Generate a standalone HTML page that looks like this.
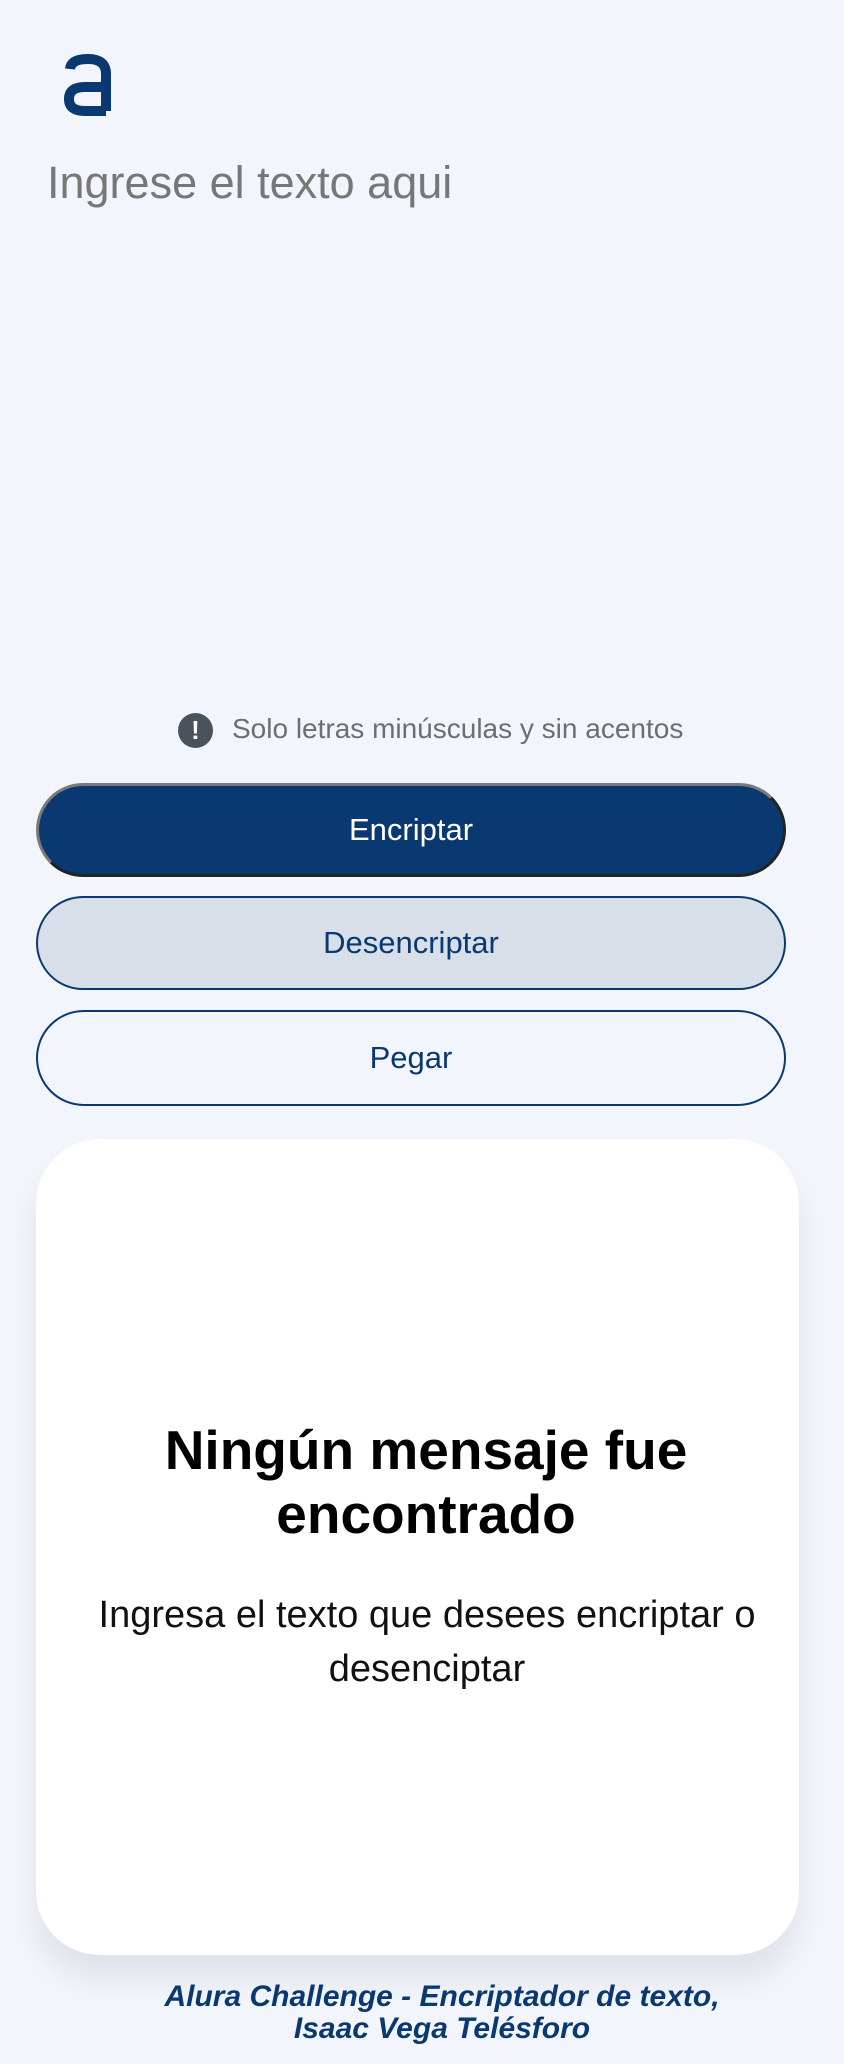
<!DOCTYPE html>
<html><head><meta charset="utf-8">
<style>
html,body{margin:0;padding:0}
body{width:844px;height:2064px;background:#f3f5fc;position:relative;overflow:hidden;font-family:"Liberation Sans",Arial,sans-serif}
.abs{position:absolute}
.ph{left:47px;top:157px;font-size:45px;color:#777;line-height:52px}
.btn{position:absolute;left:36px;width:750px;border-radius:48px;box-sizing:border-box;text-align:center;font-size:31px;display:flex;align-items:center;justify-content:center}
.b1{top:783px;height:94px;background:#0a3871;color:#fff;border:3px solid;border-color:#7a7a7a #222 #222 #7a7a7a}
.b2{top:896px;height:94px;background:#d8dfe8;color:#0a3871;border:2px solid #0a3871}
.b3{top:1010px;height:96px;background:transparent;color:#0a3871;border:2px solid #0a3871}
.card{left:36px;top:1139px;width:763px;height:816px;background:#fff;border-radius:64px;box-shadow:0 24px 32px rgba(0,0,0,0.08)}
.h{left:36px;width:780px;top:1418px;text-align:center;font-weight:bold;font-size:55px;line-height:64px;color:#000}
.p{left:30px;width:794px;top:1588px;text-align:center;font-size:38px;line-height:54px;color:#111}
.f{left:0;width:884px;top:1981px;text-align:center;font-weight:bold;font-style:italic;font-size:30px;line-height:32px;color:#0a3871}
</style></head><body>
<svg class="abs" style="left:63px;top:54px" width="50" height="62" viewBox="0 0 50 62">
<path d="M7 15 Q8 5 25 5 Q43 5 43 20 V57" stroke="#0a3871" stroke-width="10" fill="none"/>
<path d="M43 33 H22 Q6 33 6 45 Q6 57 22 57 H43" stroke="#0a3871" stroke-width="10" fill="none"/>
</svg>
<div class="abs ph">Ingrese el texto aqui</div>
<div class="abs" style="left:178px;top:713px;width:35px;height:35px;border-radius:50%;background:#4a525c;color:#fff;text-align:center;font-weight:bold;font-size:26px;line-height:35px">!</div>
<div class="abs" style="left:232px;top:713px;font-size:28px;line-height:32px;color:#6e6e6e">Solo letras minúsculas y sin acentos</div>
<div class="btn b1">Encriptar</div>
<div class="btn b2">Desencriptar</div>
<div class="btn b3">Pegar</div>
<div class="abs card"></div>
<div class="abs h">Ningún mensaje fue<br>encontrado</div>
<div class="abs p">Ingresa el texto que desees encriptar o<br>desenciptar</div>
<div class="abs f">Alura Challenge - Encriptador de texto,<br>Isaac Vega Telésforo</div>
</body></html>
